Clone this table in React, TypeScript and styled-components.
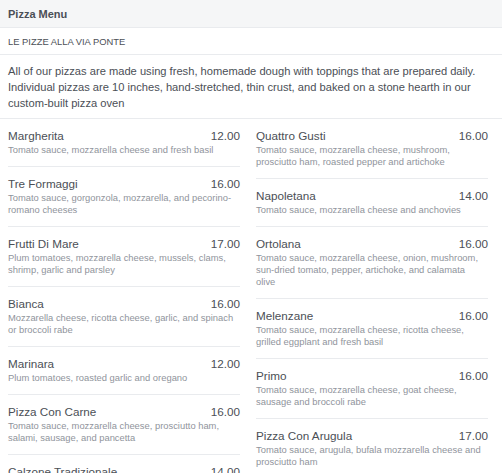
import { createGlobalStyle, styled } from "styled-components";

const GlobalStyle = createGlobalStyle`
  html, body {
    margin: 0;
    padding: 0;
    background: #ffffff;
    font-family: "Liberation Sans", Arial, sans-serif;
    overflow: hidden;
  }
`;

const textDark = "#4b4f56";
const textMuted = "#90949c";
const divider = "#e9ebee";

const Page = styled.div`
  width: 502px;
  height: 473px;
  overflow: hidden;
`;

const Header = styled.div`
  height: 27px;
  display: flex;
  align-items: center;
  padding: 0 8px;
  background: #f5f6f7;
  border-bottom: 1px solid ${divider};
  font-size: 11px;
  font-weight: bold;
  color: ${textDark};
`;

const Subtitle = styled.div`
  height: 26px;
  display: flex;
  align-items: center;
  padding: 0 8px;
  border-bottom: 1px solid ${divider};
  font-size: 9.4px;
  color: ${textDark};
`;

const Intro = styled.p`
  margin: 0;
  padding: 8px 8px 7px;
  border-bottom: 1px solid ${divider};
  font-size: 11.15px;
  line-height: 16px;
  color: ${textDark};
`;

const Columns = styled.div`
  display: grid;
  grid-template-columns: 232px 232px;
  column-gap: 16px;
  padding: 0 14px 0 8px;
  align-items: start;
`;

const Column = styled.div`
  display: flex;
  flex-direction: column;
`;

const Item = styled.div`
  padding: 9px 0 10px;
  border-bottom: 1px solid ${divider};
`;

const ItemHead = styled.div`
  display: flex;
  justify-content: space-between;
  align-items: baseline;
  font-size: 11.7px;
  line-height: 16px;
  color: ${textDark};
`;

const Desc = styled.div`
  font-size: 9.4px;
  line-height: 12px;
  color: ${textMuted};
  white-space: pre-line;
`;

type Pizza = { name: string; price: string; desc: string };

const left: Pizza[] = [
  { name: "Margherita", price: "12.00", desc: "Tomato sauce, mozzarella cheese and fresh basil" },
  { name: "Tre Formaggi", price: "16.00", desc: "Tomato sauce, gorgonzola, mozzarella, and pecorino-romano cheeses" },
  { name: "Frutti Di Mare", price: "17.00", desc: "Plum tomatoes, mozzarella cheese, mussels, clams, shrimp, garlic and parsley" },
  { name: "Bianca", price: "16.00", desc: "Mozzarella cheese, ricotta cheese, garlic, and spinach or broccoli rabe" },
  { name: "Marinara", price: "12.00", desc: "Plum tomatoes, roasted garlic and oregano" },
  { name: "Pizza Con Carne", price: "16.00", desc: "Tomato sauce, mozzarella cheese, prosciutto ham, salami, sausage, and pancetta" },
  { name: "Calzone Tradizionale", price: "14.00", desc: "Ricotta, mozzarella cheese and prosciutto ham" },
];

const right: Pizza[] = [
  { name: "Quattro Gusti", price: "16.00", desc: "Tomato sauce, mozzarella cheese, mushroom, prosciutto ham, roasted pepper and artichoke" },
  { name: "Napoletana", price: "14.00", desc: "Tomato sauce, mozzarella cheese and anchovies" },
  { name: "Ortolana", price: "16.00", desc: "Tomato sauce, mozzarella cheese, onion, mushroom, sun-dried tomato, pepper, artichoke, and calamata\nolive" },
  { name: "Melenzane", price: "16.00", desc: "Tomato sauce, mozzarella cheese, ricotta cheese, grilled eggplant and fresh basil" },
  { name: "Primo", price: "16.00", desc: "Tomato sauce, mozzarella cheese, goat cheese, sausage and broccoli rabe" },
  { name: "Pizza Con Arugula", price: "17.00", desc: "Tomato sauce, arugula, bufala mozzarella cheese and prosciutto ham" },
];

function MenuColumn({ items }: { items: Pizza[] }) {
  return (
    <Column>
      {items.map((p) => (
        <Item key={p.name}>
          <ItemHead>
            <span>{p.name}</span>
            <span>{p.price}</span>
          </ItemHead>
          <Desc>{p.desc}</Desc>
        </Item>
      ))}
    </Column>
  );
}

export default function App() {
  return (
    <>
      <GlobalStyle />
      <Page>
        <Header>Pizza Menu</Header>
        <Subtitle>LE PIZZE ALLA VIA PONTE</Subtitle>
        <Intro>
          All of our pizzas are made using fresh, homemade dough with toppings that are prepared daily.
          Individual pizzas are 10 inches, hand-stretched, thin crust, and baked on a stone hearth in our
          custom-built pizza oven
        </Intro>
        <Columns>
          <MenuColumn items={left} />
          <MenuColumn items={right} />
        </Columns>
      </Page>
    </>
  );
}
